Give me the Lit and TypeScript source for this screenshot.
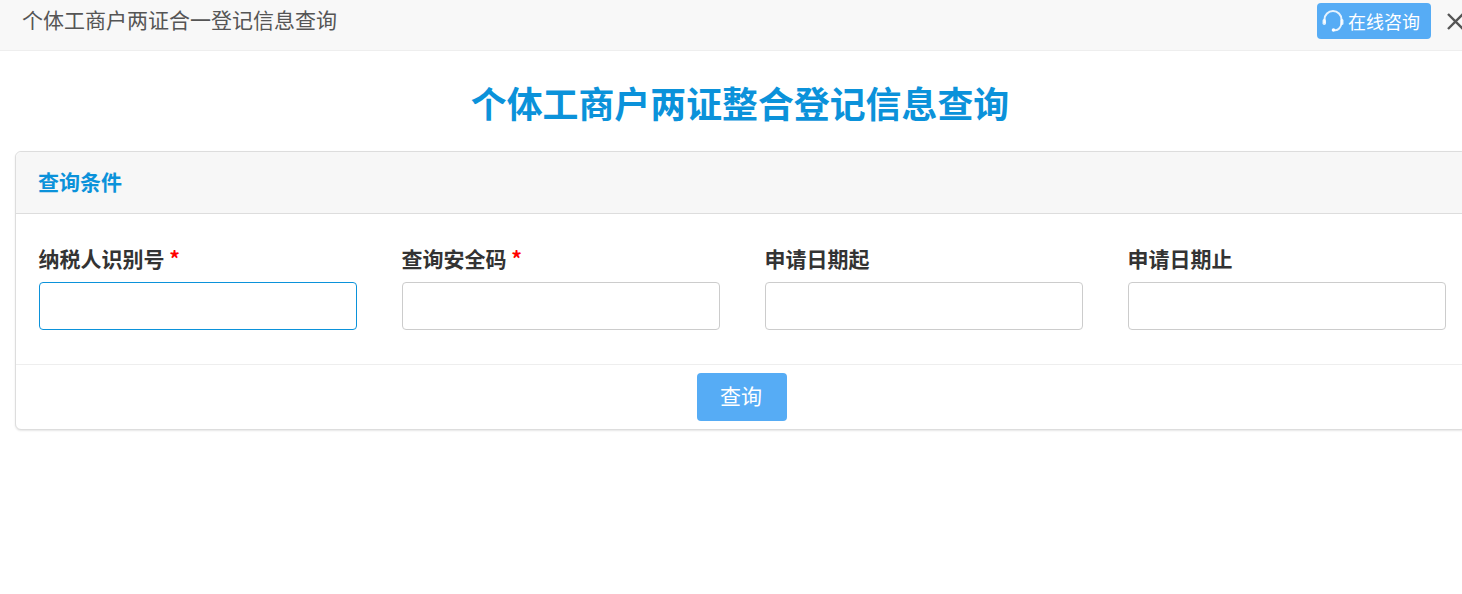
import { LitElement, html, css } from "lit";
import { customElement } from "lit/decorators.js";

const FIELDS = [
  { label: "纳税人识别号", required: true, focused: true },
  { label: "查询安全码", required: true, focused: false },
  { label: "申请日期起", required: false, focused: false },
  { label: "申请日期止", required: false, focused: false },
];

@customElement("app-root")
export class AppRoot extends LitElement {
  static styles = css`
    :host {
      display: block;
      width: 1462px;
      height: 594px;
      overflow: hidden;
      background: #fff;
      font-family: "Noto Sans CJK SC", "Liberation Sans", sans-serif;
      color: #333;
    }

    .page {
      width: 1482px;
    }

    .topbar {
      height: 50px;
      box-sizing: content-box;
      display: flex;
      align-items: flex-start;
      justify-content: space-between;
      background: #f8f8f8;
      border-bottom: 1px solid #eee;
      padding-left: 22px;
    }

    .topbar-title {
      font-size: 21px;
      line-height: 38px;
      color: #555;
    }

    .topbar-actions {
      display: flex;
      align-items: flex-start;
      width: 165px;
      margin-top: 3px;
    }

    .consult {
      display: flex;
      align-items: center;
      width: 114px;
      height: 36px;
      box-sizing: border-box;
      padding-left: 4px;
      border-radius: 4px;
      background: #56acf5;
      color: #fff;
      font-size: 18px;
      line-height: 35px;
    }

    .consult svg {
      flex: none;
      margin-right: 3px;
    }

    .close {
      margin-left: 16px;
      margin-top: 10px;
    }

    .heading {
      margin: 0;
      height: 100px;
      padding-right: 2px;
      font-size: 35.9px;
      font-weight: 700;
      line-height: 103px;
      text-align: center;
      color: #0b92da;
    }

    .card {
      margin: 0 15px;
      border: 1px solid #ddd;
      border-radius: 6px;
      box-shadow: 0 1px 2px rgba(0, 0, 0, 0.1);
      background: #fff;
    }

    .card-head {
      height: 61px;
      padding-left: 22px;
      background: #f7f7f7;
      border-bottom: 1px solid #ddd;
      border-radius: 6px 6px 0 0;
      font-size: 21px;
      font-weight: 700;
      line-height: 58px;
      color: #0b92da;
    }

    .form {
      display: grid;
      grid-template-columns: repeat(4, 318px);
      column-gap: 45px;
      height: 150px;
      padding-left: 23px;
      border-bottom: 1px solid #eee;
    }

    .field {
      padding-top: 30px;
    }

    label {
      display: block;
      height: 38px;
      margin-left: -0.5px;
      font-size: 21px;
      font-weight: 700;
      line-height: 28px;
      color: #333;
    }

    .star {
      color: #f00;
    }

    input {
      display: block;
      width: 100%;
      height: 48px;
      box-sizing: border-box;
      border: 1px solid #ccc;
      border-radius: 4px;
      background: #fff;
      outline: none;
    }

    input.focused {
      border-color: #0b92da;
    }

    .foot {
      display: flex;
      justify-content: center;
      height: 64px;
      padding: 8px 0 0 2px;
      box-sizing: border-box;
    }

    button {
      width: 90px;
      height: 48px;
      padding: 0 2px 4px 0;
      border: 0;
      border-radius: 4px;
      background: #56acf5;
      color: #fff;
      font-family: inherit;
      font-size: 21px;
    }
  `;

  render() {
    return html`<div class="page">
      <div class="topbar">
        <div class="topbar-title">个体工商户两证合一登记信息查询</div>
        <div class="topbar-actions">
          <div class="consult">
            <svg width="24" height="26" viewBox="0 0 24 26" fill="none" stroke="#fff">
              <path d="M3.5 15 V11.5 a8.5 8.5 0 0 1 17 0 V15 a6 8 0 0 1 -7 7" stroke-width="2" opacity="0.85" />
              <circle cx="12.5" cy="22" r="1.8" fill="#fff" stroke="none" />
              <rect x="1.5" y="11" width="3.5" height="6" rx="1.7" fill="#fff" stroke="none" opacity="0.8" />
              <rect x="19.5" y="11" width="3" height="6" rx="1.5" fill="#fff" stroke="none" opacity="0.8" />
            </svg>
            在线咨询
          </div>
          <svg class="close" width="17" height="17" viewBox="0 0 17 17" stroke="#555" stroke-width="2.4">
            <path d="M1 1 L16 16 M16 1 L1 16" />
          </svg>
        </div>
      </div>
      <h1 class="heading">个体工商户两证整合登记信息查询</h1>
      <div class="card">
        <div class="card-head">查询条件</div>
        <div class="form">
          ${FIELDS.map(
            (f) => html`<div class="field">
              <label>${f.label}${f.required ? html` <span class="star">*</span>` : ""}</label>
              <input class=${f.focused ? "focused" : ""} type="text" />
            </div>`
          )}
        </div>
        <div class="foot"><button>查询</button></div>
      </div>
    </div>`;
  }
}
